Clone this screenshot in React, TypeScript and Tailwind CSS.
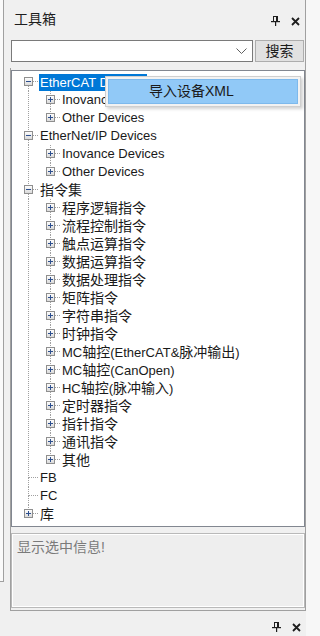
import React from "react";

type Node = { label: string; open?: boolean; plus?: boolean; selected?: boolean; children?: Node[] };

const instr = [
  "程序逻辑指令",
  "流程控制指令",
  "触点运算指令",
  "数据运算指令",
  "数据处理指令",
  "矩阵指令",
  "字符串指令",
  "时钟指令",
  "MC轴控(EtherCAT&脉冲输出)",
  "MC轴控(CanOpen)",
  "HC轴控(脉冲输入)",
  "定时器指令",
  "指针指令",
  "通讯指令",
  "其他",
];

const tree: Node[] = [
  {
    label: "EtherCAT Devices",
    open: true,
    selected: true,
    children: [
      { label: "Inovance Devices", plus: true },
      { label: "Other Devices", plus: true },
    ],
  },
  {
    label: "EtherNet/IP Devices",
    open: true,
    children: [
      { label: "Inovance Devices", plus: true },
      { label: "Other Devices", plus: true },
    ],
  },
  { label: "指令集", open: true, children: instr.map((l) => ({ label: l, plus: true })) },
  { label: "FB" },
  { label: "FC" },
  { label: "库", plus: true },
];

type Flat = { node: Node; level: number; ancestorsMore: boolean[]; first: boolean; last: boolean; isRoot: boolean };

function flatten(nodes: Node[], level: number, anc: boolean[], out: Flat[]) {
  nodes.forEach((n, i) => {
    const last = i === nodes.length - 1;
    out.push({ node: n, level, ancestorsMore: anc, first: i === 0, last, isRoot: level === 0 });
    if (n.open && n.children) flatten(n.children, level + 1, [...anc, !last], out);
  });
  return out;
}

const rows = flatten(tree, 0, [], []);

const LINE = "#a0a0a0";

function AncCell({ more }: { more: boolean }) {
  return (
    <svg width="22" height="18" className="shrink-0 block">
      {more && <line x1="11.5" y1="0" x2="11.5" y2="18" stroke={LINE} strokeDasharray="1 1" />}
    </svg>
  );
}

function OwnCell({ f }: { f: Flat }) {
  const n = f.node;
  const hasBox = n.open || n.plus;
  const topLine = !(f.isRoot && f.first);
  const bottomLine = !f.last;
  return (
    <svg width="22" height="18" className="shrink-0 block">
      {topLine && <line x1="11.5" y1="0" x2="11.5" y2="9" stroke={LINE} strokeDasharray="1 1" />}
      {bottomLine && <line x1="11.5" y1="9" x2="11.5" y2="18" stroke={LINE} strokeDasharray="1 1" />}
      <line x1={hasBox ? 16 : 12} y1="8.5" x2="22" y2="8.5" stroke={LINE} strokeDasharray="1 1" />
      {hasBox && (
        <g>
          <defs>
            <linearGradient id="bx" x1="0" y1="0" x2="0" y2="1">
              <stop offset="0" stopColor="#ffffff" />
              <stop offset="1" stopColor="#d8d8d8" />
            </linearGradient>
          </defs>
          <rect x="7.5" y="4.5" width="8" height="8" fill="url(#bx)" stroke="#8f8f8f" />
          <line x1="9" y1="8.5" x2="14" y2="8.5" stroke="#2d4f8e" />
          {n.plus && <line x1="11.5" y1="6" x2="11.5" y2="11" stroke="#2d4f8e" />}
        </g>
      )}
    </svg>
  );
}

function Label({ text }: { text: string }) {
  const parts = text.split(/([\u3000-\u9fff\uff00-\uffef]+)/).filter((p) => p.length > 0);
  return (
    <>
      {parts.map((p, i) =>
        /[\u3000-\u9fff\uff00-\uffef]/.test(p) ? (
          <span key={i} className="text-[14px]">
            {p}
          </span>
        ) : (
          <span key={i}>{p}</span>
        )
      )}
    </>
  );
}

function PinIcon() {
  return (
    <svg width="9" height="10" viewBox="0 0 9 10" className="block">
      <rect x="2.5" y="0.5" width="4" height="5" fill="none" stroke="#1e1e1e" />
      <rect x="5" y="0" width="2" height="6" fill="#1e1e1e" />
      <rect x="0" y="5" width="9" height="1.2" fill="#1e1e1e" />
      <rect x="4" y="6" width="1.2" height="4" fill="#1e1e1e" />
    </svg>
  );
}

function XIcon() {
  return (
    <svg width="9" height="9" viewBox="0 0 9 9" className="block">
      <path d="M1 1 L8 8 M8 1 L1 8" stroke="#1e1e1e" strokeWidth="1.8" />
    </svg>
  );
}

const font = { fontFamily: '"Liberation Sans", "Noto Sans CJK SC", sans-serif' };

export default function App() {
  return (
    <div className="w-[320px] h-[636px] bg-[#f0f0f0] flex text-[13px] text-[#1a1a1a] overflow-hidden" style={font}>
      <div className="w-[306px] flex flex-col">
        <div className="flex items-start">
          <div className="w-[4px] h-[582px] bg-[#fafafa] border-r border-b border-[#a0a0a0]" />
          <div className="w-[303px] h-[611px] border-r border-[#a0a0a0] flex flex-col relative">
            <div className="h-[38px] flex items-center pl-[10px] pr-[5px]">
              <span className="text-[14px] text-[#1e1e1e] flex-1 pt-[1px]">工具箱</span>
              <div className="flex items-center gap-[11px] pt-[4px]">
                <PinIcon />
                <XIcon />
              </div>
            </div>
            <div className="flex gap-[2px] ml-[7px] mt-[2px]">
              <div className="w-[242px] h-[22px] bg-white border border-[#7a7a7a] flex items-center justify-end pr-[5px]">
                <svg width="11" height="6" viewBox="0 0 11 6" className="block">
                  <path d="M0.5 0.5 L5.5 5.5 L10.5 0.5" fill="none" stroke="#606060" />
                </svg>
              </div>
              <div className="w-[49px] h-[22px] bg-[#e1e1e1] border border-[#adadad] flex items-center justify-center text-[14px]">
                搜索
              </div>
            </div>
            <div className="mt-[6px] ml-[6px] w-[295px] h-[543px] border-l border-b border-[#a0a0a0] flex flex-col">
              <div className="mt-[2px] w-[294px] h-[457px] bg-white border border-[#828790] pt-[2px] pl-[5px] relative">
                {rows.map((f, i) => (
                  <div key={i} className="h-[18px] flex items-center whitespace-nowrap">
                    {f.ancestorsMore.map((m, j) => (
                      <AncCell key={j} more={m} />
                    ))}
                    <OwnCell f={f} />
                    {f.node.selected ? (
                      <span className="ml-0 px-[1px] h-[17px] leading-[17px] bg-[#0078d7] text-white">
                        <Label text={f.node.label} />
                      </span>
                    ) : (
                      <span className="ml-[1px]">
                        <Label text={f.node.label} />
                      </span>
                    )}
                  </div>
                ))}
                <div className="absolute left-[93px] top-[5px] w-[196px] h-[31px] bg-[#f2f2f2] border border-[#cfcfcf] p-[2px] shadow-[2px_2px_3px_rgba(0,0,0,0.18)]">
                  <div className="w-full h-full bg-[#91c9f7] border border-[#7db9ec] flex items-center pl-[40px] text-[14px] text-[#1a1a1a]">
                    导入设备XML
                  </div>
                </div>
              </div>
              <div className="mt-[6px] w-[294px] h-[75px] bg-[#eeeeee] border border-[#b9b9b9] shadow-[inset_1px_1px_0_#ffffff,inset_-1px_-1px_0_#ffffff] pl-[5px] pt-[3px] text-[14px] text-[#7a7a7a]">
                显示选中信息!
              </div>
            </div>
          </div>
        </div>
        <div className="flex-1 flex items-end justify-end pb-[4px] pr-[5px] gap-[11px]">
          <PinIcon />
          <XIcon />
        </div>
      </div>
      <div className="w-[14px] h-full bg-[#f7f7f7]" />
    </div>
  );
}
